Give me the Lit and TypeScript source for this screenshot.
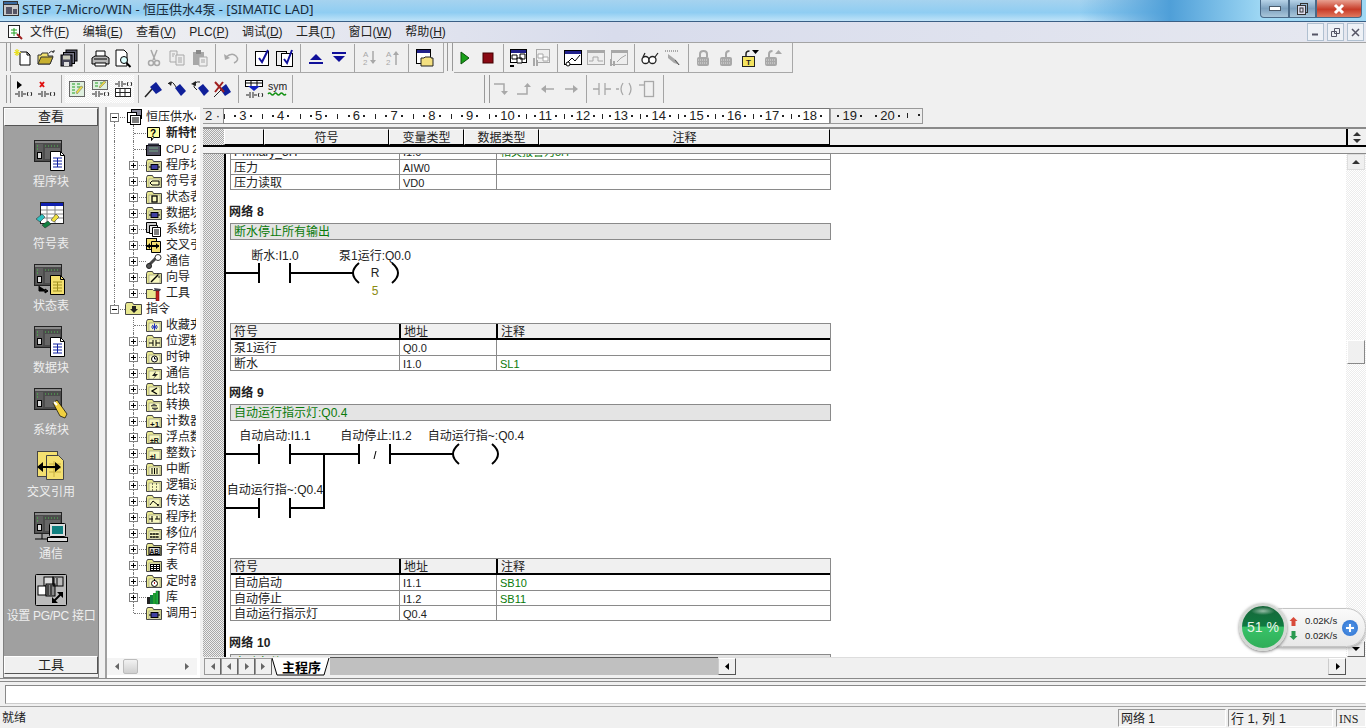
import { LitElement, css, html, svg } from 'lit';
import { customElement } from 'lit/decorators.js';

const ic = (body: unknown, w = 20, h = 20) =>
  html`<svg width=${w} height=${h} viewBox="0 0 ${w} ${h}" xmlns="http://www.w3.org/2000/svg">${body}</svg>`;

const G = '#a8a8a8';
const lad = (c = '#222', x = 2, y = 14) => svg`
  <path d="M${x} ${y}h3M${x + 4} ${y - 3}v6M${x + 7} ${y - 3}v6M${x + 8} ${y}h3" stroke=${c} fill="none"/>
  <path d="M${x + 13} ${y - 2}q-1.500 2 0 4M${x + 16} ${y - 2}q1.500 2 0 4" stroke=${c} fill="none"/>`;

// ---- toolbar icons ----
const tb: Record<string, unknown> = {
  new: svg`<path d="M7 4h7l3 3v10H7z" fill="#fff" stroke="#000"/><path d="M14 4v3h3" fill="none" stroke="#000"/>
    <path d="M4 1v7M1 4.500h7M2 2l4 5M6 2l-4 5" stroke="#e8e020" stroke-width="1.200"/>`,
  open: svg`<path d="M2 7h3l1-2h6v3h5l-3 8H2z" fill="#f0e070" stroke="#333"/><path d="M2 16l3-7h12l-3 7z" fill="#c8b030" stroke="#333"/>
    <path d="M13 5q2-3 5-1M18 4v-2M18 4h-2" fill="none" stroke="#333"/>`,
  saveall: svg`<rect x="7" y="2" width="11" height="11" fill="#556" stroke="#000"/><rect x="4.500" y="4.500" width="11" height="11" fill="#778" stroke="#000"/>
    <rect x="2" y="7" width="11" height="11" fill="#445" stroke="#000"/><rect x="4" y="7.500" width="7" height="4" fill="#ccb"/><rect x="5" y="14" width="5" height="4" fill="#ddd"/>`,
  print: svg`<path d="M6 3h9v6H6z" fill="#fff" stroke="#000"/><path d="M2 10l3-2h11l3 2v6H2z" fill="#b8b8b8" stroke="#000"/>
    <path d="M5 15h11v3H5z" fill="#fff" stroke="#000"/><path d="M4 11h13" stroke="#000"/>`,
  preview: svg`<path d="M3 2h8l3 3v13H3z" fill="#fff" stroke="#000"/><circle cx="11" cy="12" r="3.500" fill="#dff" stroke="#000"/><path d="M13.500 15l4 4" stroke="#000" stroke-width="2"/>`,
  cut: svg`<path d="M7 2l4 10M13 2l-4 10" stroke=${G} stroke-width="1.500"/><circle cx="7" cy="15" r="2.500" fill="none" stroke=${G} stroke-width="1.500"/><circle cx="13" cy="15" r="2.500" fill="none" stroke=${G} stroke-width="1.500"/>`,
  copy: svg`<path d="M3 3h7v11H3z" fill="#eee" stroke=${G}/><path d="M9 7h8v10H9z" fill="#eee" stroke=${G}/><path d="M11 10h4M11 12h4M11 14h4M5 6h3M5 8h2" stroke=${G}/>`,
  paste: svg`<rect x="3" y="4" width="11" height="13" fill=${G}/><rect x="6" y="2" width="5" height="4" fill="#888"/><path d="M9 9h8v9H9z" fill="#eee" stroke=${G}/><path d="M11 12h4M11 14h4" stroke=${G}/>`,
  undo: svg`<path d="M5 9q6-5 10-1t-2 7" fill="none" stroke=${G} stroke-width="1.500"/><path d="M3 6l1 6 5-2z" fill=${G}/>`,
  check1: svg`<rect x="3.500" y="3.500" width="13" height="14" fill="#fff" stroke="#000"/><path d="M7 10l3 4 6-12" fill="none" stroke="#10109a" stroke-width="2"/>`,
  check2: svg`<rect x="1.500" y="3.500" width="10" height="14" fill="#eee" stroke="#000"/><rect x="6.500" y="5.500" width="11" height="13" fill="#fff" stroke="#000"/><path d="M9 11l3 4 5-13" fill="none" stroke="#10109a" stroke-width="2"/>`,
  up: svg`<path d="M10 6l6 6H4z" fill="#10109a"/><path d="M3 15h14" stroke="#10109a" stroke-width="2"/>`,
  down: svg`<path d="M10 14l6-6H4z" fill="#10109a"/><path d="M3 5h14" stroke="#10109a" stroke-width="2"/>`,
  sortd: svg`<text x="3" y="9" font-size="8" fill=${G} font-family="Liberation Sans">A</text><text x="3" y="17" font-size="8" fill=${G} font-family="Liberation Sans">2</text><path d="M13 3v12" stroke=${G} stroke-width="1.500"/><path d="M10 12h6l-3 4z" fill=${G}/>`,
  sortu: svg`<text x="3" y="9" font-size="8" fill=${G} font-family="Liberation Sans">A</text><text x="3" y="17" font-size="8" fill=${G} font-family="Liberation Sans">2</text><path d="M13 6v11" stroke=${G} stroke-width="1.500"/><path d="M10 7h6l-3-4z" fill=${G}/>`,
  blocks: svg`<rect x="2.500" y="1.500" width="14" height="14" fill="#fff" stroke="#000"/><rect x="3" y="2" width="13" height="3" fill="#20208a"/>
    <path d="M7 10h3l1-1h6v1h2v8H7z" fill="#f4e080" stroke="#222"/>`,
  run: svg`<path d="M6 4l8 6-8 6z" fill="#18a018" stroke="#0a500a"/>`,
  stop: svg`<rect x="5" y="5" width="10" height="10" fill="#8a0a14" stroke="#400"/>`,
  blk1: svg`<rect x="1.500" y="1.500" width="16" height="13" fill="#fff" stroke="#000"/><rect x="2" y="2" width="15" height="3" fill="#20208a"/>
    <path d="M3 7h5v4H3zM8 10h5v5H8zM11 6h5v5h-5z" fill="#fff" stroke="#000"/><path d="M1 17h4v2H1z" fill="#000"/>`,
  blk2: svg`<rect x="4.500" y="1.500" width="13" height="13" fill="#eee" stroke=${G}/><path d="M6 6h5v4H6zM11 9h5v4h-5z" fill="#fff" stroke=${G}/><path d="M1 10h2v8H1zM4 12h2v6H4z" fill=${G}/>`,
  chart1: svg`<rect x="1.500" y="2.500" width="17" height="14" fill="#fff" stroke="#000"/><rect x="2" y="3" width="16" height="3" fill="#20208a"/><path d="M4 15l5-5 3 3 5-6" fill="none" stroke="#000"/><circle cx="5" cy="16" r="2" fill="#fff" stroke="#000"/>`,
  chart2: svg`<rect x="1.500" y="2.500" width="17" height="14" fill="#eee" stroke=${G}/><rect x="2" y="3" width="16" height="2" fill=${G}/><path d="M3 13h4v-4h5v4h5" fill="none" stroke=${G}/>`,
  chart3: svg`<rect x="2.500" y="2.500" width="16" height="14" fill="#eee" stroke=${G}/><rect x="3" y="3" width="15" height="2" fill=${G}/><path d="M1 11h2v7H1zM4 13h2v5H4z" fill=${G}/><path d="M8 14l4-4 5-3" fill="none" stroke=${G}/>`,
  glasses: svg`<circle cx="5.500" cy="12" r="3.500" fill="#fff" stroke="#222" stroke-width="1.300"/><circle cx="12.500" cy="12" r="3.500" fill="#fff" stroke="#222" stroke-width="1.300"/><path d="M3 9l2-4M15 9l3-4" stroke="#222" stroke-width="1.200" fill="none"/>`,
  pen: svg`<path d="M2 3h14" stroke=${G} stroke-dasharray="1 1" stroke-width="2"/><path d="M5 6l8 6 4 5-6-2-6-5z" fill=${G}/><path d="M12 12l4 5" stroke="#555"/>`,
  lock1: svg`<path d="M6 9V6q0-3 3.500-3T13 6v3" fill="none" stroke=${G} stroke-width="2"/><rect x="3" y="9" width="12" height="9" rx="2" fill=${G}/><path d="M4 12h10M4 15h10" stroke="#ddd" stroke-dasharray="1 1"/>`,
  lock2: svg`<path d="M9 9V6q0-3 3.500-3" fill="none" stroke=${G} stroke-width="2"/><rect x="3" y="9" width="12" height="9" rx="2" fill=${G}/><path d="M4 12h10M4 15h10" stroke="#ddd" stroke-dasharray="1 1"/>`,
  lock3: svg`<path d="M6 9V6q0-3 3.500-3" fill="none" stroke="#222" stroke-width="1.500"/><rect x="2.500" y="8.500" width="12" height="10" fill="#f4e460" stroke="#222"/><text x="6" y="17" font-size="8" font-family="Liberation Sans" font-weight="700" fill="#222">T</text><path d="M12 2h7l-3.500 4z" fill="#000"/>`,
  lock4: svg`<path d="M6 9V6q0-3 3.500-3" fill="none" stroke=${G} stroke-width="2"/><rect x="2" y="9" width="12" height="9" rx="2" fill=${G}/><path d="M3 12h10M3 15h10" stroke="#ddd" stroke-dasharray="1 1"/><path d="M12 6h7l-3.500-4z" fill=${G}/>`,
  insrt: svg`<path d="M4 2l5 4-5 4z" fill="#000"/>${lad('#222', 2, 15)}`,
  delrt: svg`<path d="M4 3l4 5M8 3l-4 5" stroke="#e01010" stroke-width="2"/>${lad('#222', 2, 15)}`,
  view1: svg`<rect x="2.500" y="2.500" width="15" height="15" fill="#e0f0e0" stroke="#666"/><path d="M5 5h3M10 5h3M5 8h3M10 8h3M5 11h3M5 14h3" stroke="#20a020"/><path d="M10 15l6-7-2-1-5 6z" fill="#f0e040" stroke="#666" stroke-width=".5"/>`,
  view2: svg`<rect x="2.500" y="1.500" width="15" height="9" fill="#e0f0e0" stroke="#666"/><path d="M5 4h3M10 4h3M5 7h3" stroke="#20a020"/><path d="M10 9l6-6-2-1-5 6z" fill="#f0e040" stroke="#666" stroke-width=".5"/>${lad('#222', 2, 15)}`,
  view3: svg`${lad('#222', 2, 5)}<rect x="2.500" y="9.500" width="15" height="8" fill="#fff" stroke="#222"/><path d="M3 13.500h14M7 10v8M12 10v8" stroke="#222"/>`,
  flag: svg`<path d="M1 18L9 9" stroke="#222" stroke-width="1.500"/><path d="M6 8l6-5 6 8-6 4z" fill="#10209a"/>`,
  flagn: svg`<path d="M1 5q3-4 6 0t3 5" fill="none" stroke="#222"/><path d="M8 9l5-4 6 7-5 5z" fill="#10209a"/><path d="M1 4l4-1-1 4z" fill="#222"/>`,
  flagp: svg`<path d="M10 3q-6-1-6 5l3 3" fill="none" stroke="#222"/><path d="M8 9l5-4 6 7-5 5z" fill="#10209a"/><path d="M1 5l5-3v5z" fill="#222"/>`,
  flagx: svg`<path d="M7 10l6-5 5 8-6 4z" fill="#10209a"/><path d="M2 3l9 10M10 3l-8 10" stroke="#a02020" stroke-width="2"/><path d="M1 18l7-7" stroke="#222"/>`,
  grid: svg`<rect x="1.500" y="1.500" width="17" height="6" fill="#fff" stroke="#000"/><path d="M1 4h18M7 2v5M13 2v5" stroke="#000"/><path d="M4 7h12l-6 5z" fill="#1020c0"/>${lad('#222', 2, 16)}`,
  sym: svg`<text x="1" y="11" font-size="10.500" font-family="Liberation Sans" fill="#222">sym</text><path d="M1 15q1.500-2 3 0t3 0 3 0 3 0 3 0 3 0" fill="none" stroke="#109010" stroke-width="1.300"/>`,
  stepi: svg`<path d="M2 5h10v8" fill="none" stroke=${G} stroke-width="1.500"/><path d="M9 12h7l-3.500 4z" fill=${G}/>`,
  stepo: svg`<path d="M2 15h10V6" fill="none" stroke=${G} stroke-width="1.500"/><path d="M9 8h7l-3.500-4z" fill=${G}/>`,
  left: svg`<path d="M4 10h12" stroke=${G} stroke-width="1.500"/><path d="M8 6l-5 4 5 4z" fill=${G}/>`,
  right: svg`<path d="M4 10h12" stroke=${G} stroke-width="1.500"/><path d="M12 6l5 4-5 4z" fill=${G}/>`,
  cont: svg`<path d="M1 10h6M7 4v12M13 4v12M13 10h6" stroke=${G} stroke-width="1.300" fill="none"/>`,
  coil: svg`<path d="M1 10h3M8 4q-4 6 0 12M14 4q4 6 0 12" stroke=${G} stroke-width="1.300" fill="none"/>`,
  box: svg`<path d="M1 6h5" stroke=${G} stroke-width="1.300"/><rect x="6.500" y="2.500" width="9" height="15" fill="none" stroke=${G} stroke-width="1.300"/>`,
};

const row1a = ['new', 'open', 'saveall', '|', 'print', 'preview', '|', 'cut', 'copy', 'paste', '|', 'undo', '|', 'check1', 'check2', '|', 'up', 'down', '|', 'sortd', 'sortu', '|', 'blocks'];
const row1b = ['run', 'stop', '|', 'blk1', 'blk2', '|', 'chart1', 'chart2', 'chart3', '|', 'glasses', 'pen', '|', 'lock1', 'lock2', 'lock3', 'lock4'];
const row2a = ['insrt', 'delrt', '|', 'view1*', 'view2*', 'view3*', '|', 'flag', 'flagn', 'flagp', 'flagx', '|', 'grid', 'sym', '|'];
const row2b = ['stepi', 'stepo', 'left', 'right', '|', 'cont', 'coil', 'box', '|'];

const tools = (list: string[]) =>
  list.map((k) => {
    if (k === '|') return html`<i class="sep"></i>`;
    const on = k.endsWith('*');
    return html`<span class="btn ${on ? 'on' : ''}">${ic(tb[k.replace('*', '')])}</span>`;
  });

// ---- navigation bar icons ----
const rack = svg`<rect x=".5" y=".5" width="27" height="21" fill="#4c4c4c" stroke="#222"/><rect x="1" y="1" width="26" height="2" fill="#8a8a8a"/>
  <rect x="2" y="4" width="7" height="16" fill="#5e5e5e"/><rect x="3.500" y="12.500" width="4" height="6" fill="#ddd" stroke="#000"/>
  <path d="M3 6h1M3 9h1" stroke="#40d040"/><path d="M11 6h14" stroke="#50c050" stroke-dasharray="1 2"/><rect x="11" y="8" width="15" height="11" fill="#666"/>`;
const doc = (fill: string, line: string) => svg`<path d="M16.500 11.500h10l4 4v15h-14z" fill=${fill} stroke="#000"/><path d="M26.500 11.500v4h4" fill="none" stroke="#000"/>
  <path d="M19 18h9M19 21h9M19 24h9M19 27h9M23.500 18v9" stroke=${line} fill="none"/>`;

const nav = [
  { t: '程序块', i: ic(svg`${rack}${doc('#fff', '#1020a0')}`, 34, 32) },
  { t: '符号表', i: ic(svg`<rect x="6.500" y=".5" width="23" height="21" fill="#fff" stroke="#222"/><rect x="7" y="1" width="22" height="3" fill="#1020b0"/>
      <path d="M7 8h22M7 12h22M7 16h22M13 4v17M21 4v17" stroke="#888"/><path d="M2 17l6-5 3 3-5 5z" fill="#30c0c0" stroke="#222" stroke-width=".5"/>
      <path d="M8 23l6-4 3 3-6 4z" fill="#108040" stroke="#222" stroke-width=".5"/><path d="M17 18l5-6 3 3-5 5z" fill="#f0e040" stroke="#222" stroke-width=".5"/>`, 34, 32) },
  { t: '状态表', i: ic(svg`${rack}${doc('#f4e070', '#a09020')}<path d="M5 22v5h8M11 25l3 2-3 2z" stroke="#000" fill="#000"/>`, 34, 32) },
  { t: '数据块', i: ic(svg`${rack}${doc('#fff', '#1020a0')}`, 34, 32) },
  { t: '系统块', i: ic(svg`${rack}<path d="M19 15l4-3 10 14-2 4-5-2z" fill="#f0d040" stroke="#000" stroke-width=".7"/><path d="M20 14l3 3" stroke="#fff" stroke-width="2"/>`, 34, 32) },
  { t: '交叉引用', i: ic(svg`<rect x="3.500" y="1.500" width="20" height="25" fill="#f4e070" stroke="#444"/><path d="M12.500 5.500h12l5 5v19h-17z" fill="#f4e070" stroke="#444"/>
      <path d="M15 14h12M15 18h12M15 22h12M20 11v16" stroke="#c8b040"/><path d="M5 17h20" stroke="#000" stroke-width="2"/><path d="M9 12l-6 5 6 5zM21 12l6 5-6 5z" fill="#000"/>`, 34, 32) },
  { t: '通信', i: ic(svg`${rack}<path d="M1 27h14M8 22v5" stroke="#000"/><rect x="15.500" y="11.500" width="16" height="13" rx="1" fill="#ddd" stroke="#000"/><rect x="18" y="14" width="11" height="8" fill="#108080"/><rect x="13.500" y="25.500" width="20" height="4" fill="#ddd" stroke="#000"/>`, 34, 32) },
  { t: '设置 PG/PC 接口', i: ic(svg`<rect x=".5" y=".5" width="31" height="31" rx="1" fill="#bbb" stroke="#000"/><rect x="9" y="3" width="9" height="9" fill="#ddd" stroke="#000"/>
      <rect x="3" y="12" width="8" height="9" fill="#fff" stroke="#000"/><rect x="11" y="10" width="9" height="12" fill="#888" stroke="#000"/><path d="M13 11v10M16 11v10M19 4v8M22 4v8" stroke="#000"/><rect x="18" y="3" width="10" height="9" fill="none" stroke="#000"/><path d="M18 28l9-9" stroke="#000" stroke-width="2"/><path d="M17 23v6h6zM28 24v-6h-6z" fill="#000"/>`, 32, 32) },
];

// ---- project tree icons ----
const folder = (g: unknown) => ic(svg`<path d="M.5 3.500l1-2h5l1 2h8v10H.5z" fill="#e8e890" stroke="#444"/><rect x="3" y="5" width="11" height="8" fill="#f8f8c0" stroke="#777" stroke-width=".5"/>${g}`, 16, 15);
const glyphs = {
  block: svg`<rect x="5" y="6.500" width="7" height="5" fill="#4040a0" stroke="#000"/><path d="M3 9h2M12 9h2" stroke="#000"/>`,
  tag: svg`<path d="M4 9l2-2h7v4H6z" fill="#f8f8c0" stroke="#000"/>`,
  stat: svg`<rect x="6" y="6" width="5" height="6" fill="none" stroke="#000" stroke-width="1.300"/>`,
  star: svg`<path d="M8.500 5.500v7M5 9h7M6 7l5 4M11 7l-5 4" stroke="#2030c0"/>`,
  bits: svg`<path d="M3 9h4M7 6v6M10 6v6M10 9h4" stroke="#000"/>`,
  clock: svg`<circle cx="8.500" cy="9" r="3" fill="#fff" stroke="#000"/><path d="M8.500 7v2h2" stroke="#000" fill="none"/>`,
  bolt: svg`<path d="M10 5L6 10h3l-2 3 5-5H9z" fill="#222"/>`,
  cmp: svg`<path d="M11 6L6 9l5 3" stroke="#000" fill="none" stroke-width="1.300"/>`,
  conv: svg`<path d="M5 8l3-2 3 2zM6 10h6l-3 2z" fill="#777" stroke="#000" stroke-width=".5"/>`,
  plus1: svg`<text x="4" y="12.500" font-size="8" font-weight="700" font-family="Liberation Sans" fill="#111">+1</text>`,
  real: svg`<text x="4" y="12.500" font-size="7" font-weight="700" font-family="Liberation Sans" fill="#111">±R</text>`,
  ints: svg`<text x="4" y="12.500" font-size="7" font-weight="700" font-family="Liberation Sans" fill="#111">±I</text>`,
  intr: svg`<path d="M6 6v6M8.500 6v6M11 6v6" stroke="#000"/>`,
  logic: svg`<path d="M6 6h1M10 6h1M6 9h1M10 9h1M6 12h1M10 12h1" stroke="#000"/>`,
  wave: svg`<path d="M4 11l3-4 5 4" stroke="#000" fill="none"/><circle cx="12" cy="11" r="1" fill="#000"/>`,
  jump: svg`<path d="M3 9h4M6 6v6M9 9h5M11 6v3" stroke="#000" fill="none"/>`,
  shift: svg`<path d="M4 8h9M4 11h9M5 7v2M8 7v2M11 7v2M5 10v2M8 10v2M11 10v2" stroke="#000"/>`,
  ab: svg`<rect x="3" y="5.500" width="11" height="7" fill="#ddd" stroke="#000"/><text x="3.500" y="11.500" font-size="6.500" font-weight="700" font-family="Liberation Sans" fill="#111">AB</text>`,
  table: svg`<rect x="4.500" y="6.500" width="9" height="6" fill="#fff" stroke="#000"/><path d="M5 8.500h8M5 10.500h8M7.500 7v5M10.500 7v5" stroke="#000"/>`,
  timer: svg`<circle cx="8.500" cy="9.500" r="3" fill="#fff" stroke="#000"/><path d="M8.500 5v2" stroke="#000"/><path d="M8.500 8v2" stroke="#c02020"/>`,
};

const T = {
  root: ic(svg`<rect x="6.500" y=".5" width="10" height="9" fill="#889" stroke="#000"/><rect x="2.500" y="3.500" width="9" height="10" fill="#fff" stroke="#000"/><rect x="5.500" y="6.500" width="10" height="9" fill="#fff" stroke="#000"/><path d="M7 9h7M7 11h7M7 13h7" stroke="#000"/>`, 18, 16),
  help: ic(svg`<path d="M1.500 1.500h12v10h-6l-2 3v-3h-4z" fill="#ffffa0" stroke="#000"/><text x="4" y="10.500" font-size="10" font-weight="700" font-family="Liberation Sans" fill="#000">?</text>`, 16, 15),
  cpu: ic(svg`<rect x=".5" y="3.500" width="14" height="10" fill="#556" stroke="#000"/><rect x="2" y="1.500" width="11" height="2" fill="#334"/><path d="M3 6h9M3 9h9" stroke="#7a8"/>`, 16, 15),
  sys: ic(svg`<path d="M.5.500h10v10H.5z" fill="#ccc" stroke="#000"/><path d="M3.500 3.500h8v8h-8z" fill="#eee" stroke="#000"/><path d="M6.500 5.500h8v9h-8z" fill="#fff" stroke="#000"/><path d="M8 8h5M8 10h5M8 12h5" stroke="#000"/>`, 16, 15),
  xref: ic(svg`<rect x=".5" y=".5" width="10" height="11" fill="#f4e070" stroke="#000"/><path d="M5.500 3.500h9v11h-9z" fill="#f4e070" stroke="#000"/><path d="M1 8h12" stroke="#000" stroke-width="2"/><path d="M4 5L1 8l3 3zM10 5l3 3-3 3z" fill="#000"/>`, 16, 15),
  comm: ic(svg`<path d="M2 12l8-8" stroke="#444" stroke-width="3"/><circle cx="12" cy="3.500" r="3" fill="#fff" stroke="#333"/><circle cx="3" cy="12" r="2.500" fill="#555" stroke="#222"/>`, 16, 15),
  wizard: folder(svg`<path d="M5 12l7-7" stroke="#000" stroke-width="1.500"/><path d="M11 4h2M13 6v2" stroke="#222"/>`),
  tools: ic(svg`<path d="M.5 3.500h6l1 1h5v8H.5z" fill="#e8e890" stroke="#444"/><path d="M9 5h5l1-2-7-1z" fill="#445" /><rect x="10" y="5" width="3" height="10" fill="#c02020" stroke="#600" stroke-width=".5"/>`, 16, 15),
  lib: ic(svg`<rect x="1" y="7" width="3" height="7" fill="#222"/><rect x="4" y="5" width="3" height="9" fill="#108040"/><rect x="7" y="3" width="3" height="11" fill="#20a030"/><rect x="10" y="1" width="3" height="13" fill="#20b040" stroke="#063" stroke-width=".5"/><path d="M13 1v13" stroke="#000"/>`, 16, 15),
  insn: ic(svg`<path d="M.5 3.500l1-2h6l1 2h8v10H.5z" fill="#e8e890" stroke="#444"/><path d="M7 5v3H5l4 4 4-4h-2V5z" fill="#222"/>`, 18, 16),
  fav: folder(glyphs.star),
};

interface Node { t: string; i: unknown; exp?: boolean; bold?: boolean; lat?: boolean }

const group1: Node[] = [
  { t: '新特性', i: T.help, bold: true },
  { t: 'CPU 224XP', i: T.cpu, lat: true },
  { t: '程序块', i: folder(glyphs.block), exp: true },
  { t: '符号表', i: folder(glyphs.tag), exp: true },
  { t: '状态表', i: folder(glyphs.stat), exp: true },
  { t: '数据块', i: folder(glyphs.block), exp: true },
  { t: '系统块', i: T.sys, exp: true },
  { t: '交叉引用', i: T.xref, exp: true },
  { t: '通信', i: T.comm, exp: true },
  { t: '向导', i: T.wizard, exp: true },
  { t: '工具', i: T.tools, exp: true },
];
const group2: Node[] = [
  { t: '收藏夹', i: T.fav },
  { t: '位逻辑', i: folder(glyphs.bits), exp: true },
  { t: '时钟', i: folder(glyphs.clock), exp: true },
  { t: '通信', i: folder(glyphs.bolt), exp: true },
  { t: '比较', i: folder(glyphs.cmp), exp: true },
  { t: '转换', i: folder(glyphs.conv), exp: true },
  { t: '计数器', i: folder(glyphs.plus1), exp: true },
  { t: '浮点数计算', i: folder(glyphs.real), exp: true },
  { t: '整数计算', i: folder(glyphs.ints), exp: true },
  { t: '中断', i: folder(glyphs.intr), exp: true },
  { t: '逻辑运算', i: folder(glyphs.logic), exp: true },
  { t: '传送', i: folder(glyphs.wave), exp: true },
  { t: '程序控制', i: folder(glyphs.jump), exp: true },
  { t: '移位/循环', i: folder(glyphs.shift), exp: true },
  { t: '字符串', i: folder(glyphs.ab), exp: true },
  { t: '表', i: folder(glyphs.table), exp: true },
  { t: '定时器', i: folder(glyphs.timer), exp: true },
  { t: '库', i: T.lib, exp: true },
  { t: '调用子程序', i: folder(glyphs.block) },
];

// ---- editor data ----
type Row = [string, string, string?];
const table0: Row[] = [['Primary_5H', 'I1.0', '相关报警为5H'], ['压力', 'AIW0'], ['压力读取', 'VD0']];
const table8: Row[] = [['泵1运行', 'Q0.0'], ['断水', 'I1.0', 'SL1']];
const table9: Row[] = [['自动启动', 'I1.1', 'SB10'], ['自动停止', 'I1.2', 'SB11'], ['自动运行指示灯', 'Q0.4']];

const rung = 'fill:none;stroke:#000;stroke-width:2';
const contact = (x: number, y: number) => svg`<path d="M${x} ${y - 10}v20M${x + 31} ${y - 10}v20" style=${rung}/>`;
const coil = (x: number, y: number) => svg`<path d="M${x + 5} ${y - 10}q-6 5-6 10t6 10M${x + 38} ${y - 10}q6 5 6 10t-6 10" style=${rung}/>`;
const label = (x: number, y: number, t: string) => svg`<text x=${x} y=${y} text-anchor="middle" class="lbl">${t}</text>`;

const ladder8 = svg`
  ${label(49, 20, '断水:I1.0')}${label(149, 20, '泵1运行:Q0.0')}
  <path d="M0 33h33M64 33h64" style=${rung}/>${contact(33, 33)}${coil(128, 33)}
  <text x="149" y="37" text-anchor="middle" class="lbl">R</text>
  <text x="149" y="55" text-anchor="middle" class="lbl five">5</text>`;

const ladder9 = svg`
  ${label(49, 19, '自动启动:I1.1')}${label(150, 19, '自动停止:I1.2')}${label(250, 19, '自动运行指~:Q0.4')}
  <path d="M0 33h33M64 33h69M164 33h64" style=${rung}/>${contact(33, 33)}${contact(133, 33)}${coil(228, 33)}
  <path d="M148 38l2-8" stroke="#000" fill="none"/>
  ${label(49, 73, '自动运行指~:Q0.4')}
  <path d="M0 87h33M64 87h34V33" style=${rung}/>${contact(33, 87)}`;

const rulerNums = [3, 4, 5, 6, 7, 8, 9, 10, 11, 12, 13, 14, 15, 16, 17, 18];

@customElement('app-root')
export class AppRoot extends LitElement {
  static styles = css`
    :host {
      display: block;
      position: relative;
      width: 1366px;
      height: 728px;
      overflow: hidden;
      background: #f0f0f0;
      color: #222;
      font: 12px/14px 'Liberation Sans', 'Noto Sans CJK SC', sans-serif;
    }
    * { box-sizing: border-box; }
    svg { display: block; flex: none; }

    .title {
      height: 22px;
      display: flex;
      align-items: center;
      padding: 0 4px 3px 3px;
      border-bottom: 1px solid #3a5f85;
      font: 13px/16px 'Noto Sans', 'Noto Sans CJK SC', sans-serif;
      color: #1a2a38;
      background:
        linear-gradient(to right, rgba(60, 130, 200, 0) 1080px, #4f9fd8 1170px, #9fd8f4 1262px),
        linear-gradient(to bottom, #a6d3ef, #8fcdf2 60%, #bfe3f8),
        #8fcdf2;
    }
    .title .name { margin-left: 3px; flex: 1; }
    .win { display: flex; align-self: flex-start; height: 18px; }
    .win span {
      display: flex;
      align-items: center;
      justify-content: center;
      width: 27px;
      border: 1px solid #4a6a88;
      border-top: 0;
      background: linear-gradient(#b7d3e8, #7da1bf 50%, #a9c6da);
    }
    .win .min { border-radius: 0 0 0 4px; width: 29px; }
    .win .close {
      width: 46px;
      border-radius: 0 0 4px 0;
      background: linear-gradient(#e8a090, #c83c28 55%, #e07a60);
    }

    .menu {
      height: 21px;
      display: flex;
      align-items: center;
      padding: 0 2px 0 7px;
      border-bottom: 1px solid #a4a4a4;
      background: linear-gradient(to right, #f4f4f4, #d8dcec 45%, #e6e8f0), #eee;
    }
    .menu .items { display: flex; gap: 13.300px; margin-left: 7px; flex: 1; }
    .menu u { text-decoration: underline; }
    .mdi { display: flex; gap: 3px; }
    .mdi span {
      width: 17px;
      height: 18px;
      display: flex;
      align-items: center;
      justify-content: center;
      border: 1px solid #b0c0d0;
      background: #eef1f6;
    }

    .tbrow { display: flex; align-items: flex-start; }
    .tb1 { height: 31px; padding-left: 6px; }
    .tb2 { height: 33px; padding-left: 6px; padding-top: 1px; }
    .grip {
      flex: none;
      width: 6px;
      height: 28px;
      border-left: 1px solid #999;
      border-right: 1px solid #999;
      margin-right: .5px;
    }
    .grip.s { width: 4.500px; }
    .grp { display: flex; align-items: center; height: 30px; border-right: 1px solid #a8a8a8; }
    .tb1 .grp { border-bottom: 1px solid #a8a8a8; }
    .btn { width: 23px; height: 28px; display: flex; align-items: center; justify-content: center; flex: none; }
    .btn.on { background: repeating-conic-gradient(#f0f0f0 0 25%, #fff 0 50%) 0 0/2px 2px; }
    .sep { width: 8px; height: 28px; flex: none; background: linear-gradient(#a4a4a4, #a4a4a4) center/1px 100% no-repeat; }
    .pad-a { padding-right: 8px; margin-right: 3px; }
    .pad-b { padding-right: 7px; }
    .sp { width: 188px; flex: none; }

    .main { height: 571px; display: flex; }

    .bar {
      width: 96px;
      margin-left: 3px;
      display: flex;
      flex-direction: column;
      border: 1px solid #808080;
    }
    .bar .cap {
      height: 18px;
      flex: none;
      display: flex;
      align-items: center;
      justify-content: center;
      background: #f0f0f0;
      border: 1px solid;
      border-color: #fff #555 #555 #fff;
      font-size: 13px;
    }
    .bar .items { flex: 1; background: #a0a0a0; padding-top: 14px; overflow: hidden; }
    .bar .it {
      height: 62px;
      display: flex;
      flex-direction: column;
      align-items: center;
      color: #eeeeee;
      font-size: 12px;
      white-space: nowrap;
    }
    .bar .it:last-child { letter-spacing: -.3px; }
    .bar .it svg { margin-bottom: 3px; }
    .bar .foot { margin-bottom: 3px; }

    .tree {
      width: 95px;
      margin-left: 6px;
      display: flex;
      flex-direction: column;
      border-left: 2px solid #a0a0a0;
      background: #fff;
    }
    .tree .list { flex: 1; overflow: hidden; padding-top: 2px; margin-left: -2px; width: 91px; }
    .node { display: flex; align-items: center; height: 16px; white-space: nowrap; position: relative; }
    .cell { flex: none; width: 19px; height: 16px; position: relative; }
    .cell.v::before, .cell.l::before, .cell.f::before {
      content: '';
      position: absolute;
      left: 9px;
      border-left: 1px dotted #777;
    }
    .cell.v::before { top: 0; bottom: 0; }
    .cell.l::before { top: 0; height: 8px; }
    .cell.f::before { top: 8px; bottom: 0; }
    .cell.h::after {
      content: '';
      position: absolute;
      left: 10px;
      right: -3px;
      top: 8px;
      border-top: 1px dotted #777;
    }
    .cell b {
      position: absolute;
      left: 5px;
      top: 4px;
      width: 9px;
      height: 9px;
      border: 1px solid #808080;
      background:
        linear-gradient(#000, #000) center/5px 1px no-repeat,
        #fff;
      z-index: 1;
    }
    .cell b.p {
      background:
        linear-gradient(#000, #000) center/5px 1px no-repeat,
        linear-gradient(#000, #000) center/1px 5px no-repeat,
        #fff;
    }
    .node .ico { margin-left: 3px; z-index: 1; background: #fff; }
    .node .txt { margin-left: 4px; }
    .node .txt.lat { font-size: 11px; }
    .node.top .ico { margin-left: 1px; }
    .node.top .txt { margin-left: 3px; }
    .node .bold { font-weight: 700; }

    .hs {
      height: 17px;
      display: flex;
      align-items: center;
      justify-content: space-between;
      margin: 1px 3px 3px 0;
      padding: 0 6px 0 6px;
      background: #f4f4f4;
      flex: none;
    }
    .hs .thumb {
      width: 15px;
      height: 15px;
      background: linear-gradient(#f2f2f2, #cfcfcf);
      border: 1px solid #bbb;
      border-radius: 2px;
      margin-right: 44px;
    }

    .editor { flex: 1; margin-left: 3px; min-width: 0; display: flex; flex-direction: column; padding-top: 1px; }

    .ruler { height: 16px; display: flex; flex: none; align-items: stretch; font-size: 13px; line-height: 14px; }
    .ruler .seg { display: flex; border: 1px solid #999; }
    .ruler .dim { background: #eee; }
    .ruler .dim .tk { visibility: hidden; }
    .ruler .white { background: #fff; border-color: #888; border-top-color: #777; }
    .ruler .head { width: 20px; padding-left: 2px; border: 0; border-top: 1px solid #999; border-bottom: 1px solid #999; }
    .rc { width: 37.800px; display: grid; grid-template-columns: 1fr auto 1fr; align-items: center; flex: none; }
    .rc .lft { display: flex; justify-content: space-between; align-items: center; padding-right: 3px; }
    .rc .rgt { display: flex; padding-left: 3px; align-items: center; }
    .rc .dot { width: 2px; height: 2px; background: #222; }
    .rc .tk { width: 1px; height: 5px; background: #222; }
    .dimend { width: 16px; flex: none; padding-top: 4px; display: flex; gap: 10px; padding-left: 1px; }
    .dimend i { width: 1px; height: 5px; background: #222; }
    .dimend i + i { width: 2px; height: 2px; margin-top: 1px; }

    .hdr {
      height: 20px;
      margin-top: 3px;
      display: flex;
      flex: none;
      border-top: 2px solid #8a8a8a;
      border-bottom: 2px solid #000;
      background: #f0f0f0;
    }
    .dither { background: repeating-conic-gradient(#a8a8a8 0 25%, #eee 0 50%) 0 0/2px 2px; }
    .hdr .corner { width: 21px; flex: none; }
    .hdr .c {
      flex: none;
      display: flex;
      align-items: center;
      justify-content: center;
      padding-top: 1px;
      border: 1px solid;
      border-color: #fff #000 #000 #fff;
      font-size: 12px;
    }
    .hdr .c.w0 { width: 40px; }
    .hdr .c.w1 { width: 125px; }
    .hdr .c.w2 { width: 75px; }
    .hdr .c.w3 { width: 291px; }
    .hdr .fill { flex: 1; border-right: 2px solid #000; }
    .hdr .spin {
      width: 18px;
      flex: none;
      display: flex;
      flex-direction: column;
      align-items: center;
      justify-content: center;
      gap: 3px;
    }
    .band { height: 6px; flex: none; background: #f2f2f2; }

    .view { height: 504px; display: flex; flex: none; border-top: 1px solid #8a8a8a; }
    .view .gutter { width: 21px; flex: none; }
    .view .page {
      flex: 1;
      min-width: 0;
      overflow: hidden;
      background: #fff;
      border-left: 2px solid #000;
      padding-left: 4px;
    }
    .vs {
      width: 20px;
      flex: none;
      display: flex;
      flex-direction: column;
      align-items: center;
      background: repeating-conic-gradient(#ececec 0 25%, #fff 0 50%) 0 0/2px 2px;
    }
    .vs .ub { width: 18px; height: 16px; background: #f0f0f0; display: flex; align-items: center; justify-content: center; border: 1px solid #ddd; }
    .vs .ub.dn { border-color: #fff #666 #666 #fff; }
    .vs .th { width: 18px; height: 24px; margin-top: 170px; margin-bottom: auto; background: #f0f0f0; border: 1px solid; border-color: #fff #888 #888 #fff; }

    .st { width: 601px; border: 1px solid #8a8a8a; }
    .st .r { display: grid; grid-template-columns: 168px 97px 1fr; height: 15px; border-top: 1px solid #8a8a8a; }
    .st .r:first-child { border-top: 0; }
    .st .r > span { padding: 1px 0 0 3px; line-height: 14px; white-space: nowrap; overflow: hidden; }
    .st .r > span + span { border-left: 1px solid #8a8a8a; font-size: 11px; }
    .st .r.th { height: 16px; background: #f0f0f0; border-bottom: 2px solid #000; }
    .st .r.th > span + span { border-left: 2px solid #000; font-size: 12px; }
    .st .r.th + .r { border-top: 0; }
    .st .r > .cm { color: #0a7a0a; }
    .st.first { margin-top: -11px; }

    .nt { font-weight: 700; margin: 15px 0 0 -1px; height: 14px; line-height: 14px; letter-spacing: .2px; }
    .cmt {
      width: 601px;
      height: 17px;
      margin-top: 4px;
      padding: 1px 0 0 3px;
      background: #e4e4e4;
      border: 1px solid #8a8a8a;
      color: #0a7a0a;
      line-height: 15px;
    }
    .lad { display: block; width: 600px; margin-left: -4px; }
    .lbl { font-size: 12px; fill: #222; }
    .lbl.five { fill: #8a8a10; }

    .tabs { height: 20px; display: flex; flex: none; background: #f0f0f0; align-items: flex-start; }
    .tabs .n {
      width: 17px;
      height: 17px;
      margin-top: 1px;
      flex: none;
      display: flex;
      align-items: center;
      justify-content: center;
      border: 1px solid #999;
      border-right-color: #666;
      background: #f0f0f0;
    }
    .tabs .nb { margin-left: 1px; display: flex; }
    .tab { width: 58px; height: 18px; flex: none; margin-top: 1px; }
    .tab text { font-size: 13px; font-weight: 700; }
    .tabs .gr { flex: none; width: 388px; height: 18px; background: #c0c0c0; border-top: 1px solid #555; }
    .tabs .hb { flex: 1; height: 18px; display: flex; justify-content: space-between; border-top: 1px solid #ddd; }
    .tabs .hb span {
      width: 18px;
      height: 17px;
      display: flex;
      align-items: center;
      justify-content: center;
      background: #f0f0f0;
      border: 1px solid;
      border-color: #fff #555 #555 #ccc;
    }
    .tabs .cor { width: 20px; flex: none; }

    .cmd { height: 29px; padding-top: 2px; border-top: 1px solid #8a8a8a; border-bottom: 1px solid #a4a4a4; }
    .cmd::before { content: ''; display: block; height: 2px; border-top: 1px solid #8a8a8a; }
    .cmd .inp {
      height: 19px;
      margin: 1px 0 0 5px;
      background: #fff;
      border: 1px solid;
      border-color: #888 #fff #ccc #888;
    }

    .status { height: 21px; display: flex; align-items: center; padding-left: 2px; font-size: 12px; }
    .status .msg { flex: 1; }
    .status .p { height: 18px; padding: 2px 0 0 2px; border: 1px solid; border-color: #999 #fff #fff #999; }
    .status .net { width: 108px; margin-right: 2px; }
    .status .pos { width: 105px; margin-right: 3px; font-size: 13px; }
    .status .ins { width: 30px; font: 12px/14px 'Liberation Serif', serif; }

    .float { position: absolute; left: 1239px; top: 603px; width: 127px; height: 48px; }
    .pill {
      position: absolute;
      left: 24px;
      top: 5px;
      width: 103px;
      height: 39px;
      border-radius: 20px;
      border: 1px solid #c4c4c4;
      background: linear-gradient(#fafafa, #e8e8e8);
      box-shadow: 0 2px 3px rgba(0, 0, 0, .3);
    }
    .ball {
      position: absolute;
      left: 0;
      top: 0;
      width: 48px;
      height: 48px;
      border-radius: 50%;
      border: 3px solid #d4d8d4;
      background:
        radial-gradient(ellipse 12px 4px at 50% 12%, rgba(255, 255, 255, .55), rgba(255, 255, 255, 0)),
        linear-gradient(#17663a 0, #0f7a40 48%, #38c268 50%, #30ae58 100%);
      box-shadow: 0 1px 3px rgba(0, 0, 0, .5);
      display: flex;
      align-items: center;
      justify-content: center;
      color: #eaf6ea;
      font: 14px/16px 'Liberation Sans', sans-serif;
    }
    .rate {
      position: absolute;
      left: 66px;
      font: 9.500px/12px 'Liberation Sans', sans-serif;
      color: #222;
    }
    .rate.a { top: 12px; }
    .rate.b { top: 27px; }
    .arr { position: absolute; left: 50px; }
    .arr.a { top: 14px; }
    .arr.b { top: 28px; }
    .plus {
      position: absolute;
      left: 103px;
      top: 17px;
      width: 16px;
      height: 16px;
      border-radius: 50%;
      background: radial-gradient(#5a9be8, #2a6fd0);
      display: flex;
      align-items: center;
      justify-content: center;
    }
  `;

  private node(n: Node, outer: string, inner: string) {
    return html`<div class="node">
      <span class="cell ${outer}"></span>
      <span class="cell ${inner} h">${n.exp ? html`<b class="p"></b>` : ''}</span>
      <span class="ico">${n.i}</span>
      <span class="txt ${n.bold ? 'bold' : ''} ${n.lat ? 'lat' : ''}">${n.t}</span>
    </div>`;
  }

  private symtab(rows: Row[], head: Row | null, cls = '') {
    return html`<div class="st ${cls}">
      ${head ? html`<div class="r th">${head.map((c) => html`<span>${c}</span>`)}</div>` : ''}
      ${rows.map(
        ([a, b, c]) => html`<div class="r"><span>${a}</span><span>${b}</span><span class="cm">${c ?? ''}</span></div>`
      )}
    </div>`;
  }

  private rcell(n: number) {
    return html`<span class="rc"
      ><span class="lft"><i class="tk"></i><i class="dot"></i></span><span>${n}</span
      ><span class="rgt"><i class="dot"></i></span
    ></span>`;
  }

  render() {
    const tri = (d: string, c = '#000') => ic(svg`<path d=${d} fill=${c}/>`, 9, 9);
    return html`
      <div class="title">
        ${ic(svg`<rect x=".5" y=".5" width="14" height="3" fill="#3a6aa0" stroke="#333"/><rect x=".5" y="3.500" width="15" height="11" fill="#c8c8c8" stroke="#333"/><path d="M3 6h6v7H3zM10 8h4v5h-4z" fill="#556" />`, 16, 16)}
        <span class="name">STEP 7-Micro/WIN - 恒压供水4泵 - [SIMATIC LAD]</span>
        <div class="win">
          <span class="min">${ic(svg`<rect x=".5" y="1.500" width="11" height="4" fill="#fff" stroke="#4a5a6a"/>`, 12, 7)}</span>
          <span>${ic(svg`<rect x="3.500" y=".5" width="7" height="9" fill="none" stroke="#333"/><rect x=".5" y="2.500" width="8" height="9" fill="#dde" stroke="#333"/><rect x="3" y="5" width="3" height="4" fill="none" stroke="#333"/>`, 12, 12)}</span>
          <span class="close">${ic(svg`<path d="M2 2l8 8M10 2l-8 8" stroke="#fff" stroke-width="3"/>`, 12, 12)}</span>
        </div>
      </div>

      <div class="menu">
        ${ic(svg`<rect x="1.500" y="1.500" width="11" height="12" fill="#fff" stroke="#222"/><path d="M4 6h6M4 9h6M7 4v8" stroke="#20a020"/><path d="M10 10l5 5" stroke="#a02020" stroke-width="2"/>`, 16, 16)}
        <div class="items">
          <span>文件(<u>F</u>)</span><span>编辑(<u>E</u>)</span><span>查看(<u>V</u>)</span><span>PLC(<u>P</u>)</span>
          <span>调试(<u>D</u>)</span><span>工具(<u>T</u>)</span><span>窗口(<u>W</u>)</span><span>帮助(<u>H</u>)</span>
        </div>
        <div class="mdi">
          <span>${ic(svg`<path d="M1 6.500h6" stroke="#556" stroke-width="2"/>`, 9, 9)}</span>
          <span>${ic(svg`<path d="M3.500.5h5v5h-5zM.5 3.500h5v5h-5z" fill="#eef1f6" stroke="#556"/>`, 9, 9)}</span>
          <span>${ic(svg`<path d="M1 1l7 7M8 1L1 8" stroke="#556" stroke-width="1.500"/>`, 9, 9)}</span>
        </div>
      </div>

      <div class="tbrow tb1">
        <i class="grip s"></i>
        <div class="grp pad-a">${tools(row1a)}</div>
        <i class="grip"></i>
        <div class="grp pad-b">${tools(row1b)}</div>
      </div>
      <div class="tbrow tb2">
        <i class="grip s"></i>
        ${tools(row2a)}
        <span class="sp"></span>
        <i class="grip"></i>
        ${tools(row2b)}
      </div>

      <div class="main">
        <div class="bar">
          <div class="cap">查看</div>
          <div class="items">${nav.map((n) => html`<div class="it">${n.i}<span>${n.t}</span></div>`)}</div>
          <div class="cap foot">工具</div>
        </div>

        <div class="tree">
          <div class="list">
            <div class="node top">
              <span class="cell f h"><b></b></span>
              <span class="ico">${T.root}</span><span class="txt">恒压供水4泵</span>
            </div>
            ${group1.map((n, i) => this.node(n, 'v', i === group1.length - 1 ? 'l' : 'v'))}
            <div class="node top">
              <span class="cell l h"><b></b></span>
              <span class="ico">${T.insn}</span><span class="txt">指令</span>
            </div>
            ${group2.map((n, i) => this.node(n, '', i === group2.length - 1 ? 'l' : 'v'))}
          </div>
          <div class="hs">
            ${tri('M6 1v7L2 4.500z', '#666')}<span class="thumb"></span>${tri('M3 1v7l4-3.500z', '#666')}
          </div>
        </div>

        <div class="editor">
          <div class="ruler">
            <span class="seg dim head">2 ·</span>
            <span class="seg white">${rulerNums.map((n) => this.rcell(n))}</span>
            <span class="seg dim">${[19, 20].map((n) => this.rcell(n))}<span class="dimend"><i></i><i></i></span></span>
          </div>
          <div class="hdr">
            <span class="corner dither"></span>
            <span class="c w0"></span>
            <span class="c w1">符号</span>
            <span class="c w2">变量类型</span>
            <span class="c w2">数据类型</span>
            <span class="c w3">注释</span>
            <span class="fill"></span>
            <span class="spin">${ic(svg`<path d="M4 0l4 4H0z" fill="#333"/>`, 8, 4)}${ic(svg`<path d="M4 4l4-4H0z" fill="#333"/>`, 8, 4)}</span>
          </div>
          <div class="band"></div>
          <div class="view">
            <div class="gutter dither"></div>
            <div class="page">
              ${this.symtab(table0, null, 'first')}

              <div class="nt">网络 8</div>
              <div class="cmt">断水停止所有输出</div>
              <svg class="lad" height="83" viewBox="0 0 600 83">${ladder8}</svg>
              ${this.symtab(table8, ['符号', '地址', '注释'])}

              <div class="nt">网络 9</div>
              <div class="cmt">自动运行指示灯:Q0.4</div>
              <svg class="lad" height="137" viewBox="0 0 600 137">${ladder9}</svg>
              ${this.symtab(table9, ['符号', '地址', '注释'])}

              <div class="nt">网络 10</div>
              <div class="cmt">启动条件</div>
            </div>
            <div class="vs">
              <span class="ub">${ic(svg`<path d="M4 1l4 4H0z" fill="#333"/>`, 8, 6)}</span>
              <span class="th"></span>
              <span class="ub dn">${ic(svg`<path d="M4 5l4-4H0z" fill="#000"/>`, 8, 6)}</span>
            </div>
          </div>
          <div class="tabs">
            <div class="nb">
              <span class="n">${tri('M2 1v7M7 1v7L3 4.500z', '#666')}</span>
              <span class="n">${tri('M6 1v7L2 4.500z', '#666')}</span>
              <span class="n">${tri('M3 1v7l4-3.500z', '#666')}</span>
              <span class="n">${tri('M7 1v7M2 1v7l4-3.500z', '#666')}</span>
            </div>
            <svg class="tab" width="58" height="18" viewBox="0 0 58 18">
              <path d="M0 0l5 17h47L57 0" fill="#fff" stroke="#000"/>
              <text x="10" y="14">主程序</text>
            </svg>
            <span class="gr"></span>
            <div class="hb">
              <span>${tri('M6 1v7L2 4.500z')}</span>
              <span>${tri('M3 1v7l4-3.500z')}</span>
            </div>
            <span class="cor"></span>
          </div>
        </div>
      </div>

      <div class="cmd"><div class="inp"></div></div>

      <div class="status">
        <span class="msg">就绪</span>
        <span class="p net">网络 1</span>
        <span class="p pos">行 1, 列 1</span>
        <span class="p ins">INS</span>
      </div>

      <div class="float">
        <div class="pill"></div>
        <div class="ball">51 %</div>
        <span class="arr a">${ic(svg`<path d="M4.500 0l4 4H6.500v5h-4V4H.5z" fill="#d84a3a"/>`, 9, 9)}</span>
        <span class="arr b">${ic(svg`<path d="M4.500 9l4-4H6.500V0h-4v5H.5z" fill="#2a9a50"/>`, 9, 9)}</span>
        <span class="rate a">0.02K/s</span>
        <span class="rate b">0.02K/s</span>
        <span class="plus">${ic(svg`<path d="M5 1v8M1 5h8" stroke="#fff" stroke-width="2"/>`, 10, 10)}</span>
      </div>
    `;
  }
}
